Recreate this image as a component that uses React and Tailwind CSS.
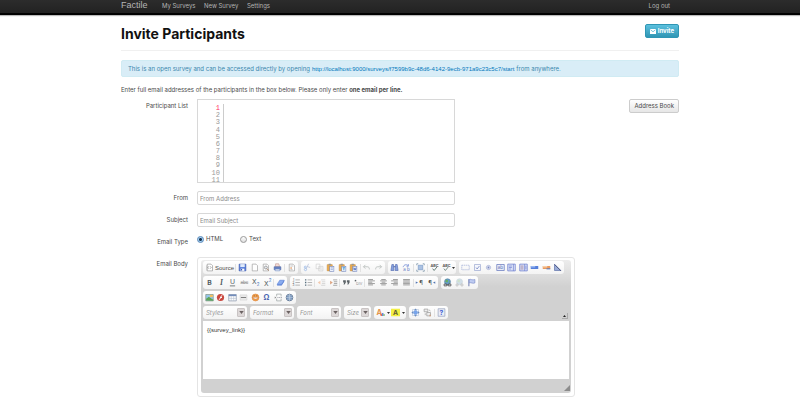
import React from "react";

const stroke = (color, width = 1) => ({ fill: "none", stroke: color, strokeWidth: width });

const Page = ({ children, edge = "#8a8a8a" }) => (
  <>
    <path d="M3 1.5h5l2 2v7H3z" fill="#fff" stroke={edge} strokeWidth="0.8" />
    {children}
  </>
);

const Clipboard = ({ children }) => (
  <>
    <rect x="1.5" y="2" width="7" height="8.5" rx="0.5" fill="#e8a33c" stroke="#b98235" strokeWidth="0.6" />
    <rect x="3.5" y="1" width="3" height="2" fill="#8b8b8b" />
    <rect x="5" y="4.5" width="5.5" height="6.5" fill="#eef3fd" stroke="#5570b8" strokeWidth="0.7" />
    {children}
  </>
);

const Lines = ({ xs, color = "#777" }) => (
  <g {...stroke(color, 1)}>
    {xs.map(([a, b], i) => (
      <path key={i} d={`M${a} ${2 + i * 1.8}H${b}`} />
    ))}
  </g>
);

const Glyph = ({ children, color = "#444", size = 8, x = 6, y = 9, ...rest }) => (
  <text x={x} y={y} fontSize={size} fill={color} textAnchor="middle" {...rest}>
    {children}
  </text>
);

const icons = {
  Source: (
    <Page>
      <path d="M5 4.5L3.8 6 5 7.5M7 4.5L8.2 6 7 7.5" {...stroke("#777", 0.9)} />
      <path d="M2 3v7" {...stroke("#bbb", 0.8)} />
    </Page>
  ),
  Save: (
    <>
      <path d="M1.5 1.5h9v9h-9z" fill="#3f6bd6" stroke="#2d4ba5" strokeWidth="0.8" />
      <path d="M3 1.5h6v4H3z" fill="#dfeafa" />
      <path d="M3.5 7.5h5v3h-5z" fill="#fff" />
      <path d="M4 8h1.5v2H4z" fill="#2d4ba5" />
    </>
  ),
  "New Page": <Page />,
  Preview: (
    <Page>
      <circle cx="6.5" cy="6" r="2" fill="#e3e8ee" stroke="#777" strokeWidth="0.9" />
      <path d="M8 7.5l2 2.5" {...stroke("#a26d4a", 1.2)} />
    </Page>
  ),
  Print: (
    <>
      <path d="M3.5 1h4l1.5 4H3z" fill="#f4d9d3" stroke="#b07a75" strokeWidth="0.7" />
      <path d="M1.5 5h9v4h-9z" fill="#5877bd" stroke="#3c559b" strokeWidth="0.7" />
      <path d="M3 8h6v2.5H3z" fill="#d5deef" stroke="#5877bd" strokeWidth="0.6" />
    </>
  ),
  Templates: (
    <Page>
      <path d="M4.5 4h4M4.5 8.5h3" {...stroke("#999", 0.8)} />
      <path d="M4.5 5.5h2v2h-2z" fill="#e39a64" />
    </Page>
  ),
  Cut: (
    <g opacity="0.5">
      <path d="M7.5 1L4 8M5 4.5L9.5 6" {...stroke("#667fb5", 1)} />
      <circle cx="3.3" cy="8.7" r="1.5" {...stroke("#3978d8", 1.1)} />
      <circle cx="3" cy="5.5" r="1.3" {...stroke("#3978d8", 1.1)} />
    </g>
  ),
  Copy: (
    <g opacity="0.4">
      <path d="M1.5 1.5h5v6h-5zM5 4.5h5.5v6H5z" fill="#fff" stroke="#888" strokeWidth="0.9" />
      <path d="M6.3 6.5h3M6.3 8.3h3" {...stroke("#888", 0.7)} />
    </g>
  ),
  Paste: (
    <Clipboard>
      <path d="M6.2 6.5h3M6.2 8.5h3" {...stroke("#5570b8", 0.7)} />
    </Clipboard>
  ),
  "Paste as plain text": (
    <Clipboard>
      <path d="M6 6.3h3.6M7.8 6.3v3.4" {...stroke("#2d8ed0", 1.2)} />
    </Clipboard>
  ),
  "Paste from Word": (
    <Clipboard>
      <path d="M6 6l.9 3.5.9-3 .9 3 .9-3.5" {...stroke("#264eae", 0.8)} />
    </Clipboard>
  ),
  Undo: <path d="M4.5 2.5L2 5l2.5 2.5M2 5h5c2 0 2.8 1 2.8 3.5" {...stroke("#b5bbb9", 1.2)} />,
  Redo: <path d="M7.5 2.5L10 5 7.5 7.5M10 5H5C3 5 2.2 6 2.2 8.5" {...stroke("#b5bbb9", 1.2)} />,
  Find: (
    <>
      <path d="M2.5 2h2.2l.5 8H1.2zM7.3 2h2.2l1.3 8h-4z" fill="#7b98dd" stroke="#3c57a5" strokeWidth="0.8" />
      <path d="M4.8 5h2.5" {...stroke("#3c57a5", 1.4)} />
    </>
  ),
  Replace: (
    <>
      <path d="M1.5 5.5C2.5 2 6 1.5 8 3.5M8.5 1.5v2.8H6" {...stroke("#5776ce", 1)} />
      <Glyph size={6} x={3.5} y={10} color="#4765bb">a</Glyph>
      <Glyph size={6} x={8.5} y={10} color="#4765bb">b</Glyph>
    </>
  ),
  "Select All": (
    <>
      <path d="M3 3h6v6H3z" fill="#a3bce0" stroke="#6288bd" strokeWidth="0.8" />
      <path d="M1 3V1h2M9 1h2v2M11 9v2H9M3 11H1V9" {...stroke("#69869d", 1)} />
    </>
  ),
  "Check Spelling": (
    <>
      <Glyph size={5} y={5} fontWeight="bold">ABC</Glyph>
      <path d="M3.5 7.5L5.5 10 9.5 5" {...stroke("#57736b", 1.3)} />
    </>
  ),
  "Spell Check As You Type": (
    <>
      <Glyph size={5} y={5} fontWeight="bold">ABC</Glyph>
      <path d="M2.5 7.5L4.5 10 8.5 5" {...stroke("#57736b", 1.1)} />
    </>
  ),
  Form: <path d="M1 3h10v6H1z" {...stroke("#8798ce", 0.9)} strokeDasharray="1.6 1" />,
  Checkbox: (
    <>
      <path d="M2 2h8v8H2z" fill="#f5f7fd" stroke="#8e9ccb" strokeWidth="0.9" />
      <path d="M4 6l1.5 2L8.5 4" {...stroke("#6577bb", 1)} />
    </>
  ),
  "Radio Button": (
    <>
      <circle cx="6" cy="6" r="2.8" fill="#dfe3f3" stroke="#97a3d0" strokeWidth="0.9" />
      <circle cx="6" cy="6" r="1.2" fill="#6c7cba" />
    </>
  ),
  "Text Field": (
    <>
      <path d="M1 2h10v8H1z" fill="#e8ecfa" stroke="#5b6fb9" strokeWidth="1" />
      <Glyph size={6} y={8} color="#4257a5">ab</Glyph>
    </>
  ),
  Textarea: (
    <>
      <path d="M1 1.5h10v9H1z" fill="#dce3f9" stroke="#5b6fc9" strokeWidth="1" />
      <path d="M8.5 1.5v9M2.5 4h4M2.5 6h4M2.5 8h3" {...stroke("#5b6fc9", 0.9)} />
    </>
  ),
  "Selection Field": (
    <>
      <path d="M1 1.5h10v9H1z" fill="#dce3f9" stroke="#5b6fc9" strokeWidth="1" />
      <path d="M2 3h4v6H2z" fill="#b8adc9" />
      <path d="M7.5 1.5v9M9.2 3.5v5" {...stroke("#5b6fc9", 0.9)} />
    </>
  ),
  Button: (
    <>
      <path d="M1 4h10v4H1z" fill="#4472d8" />
      <path d="M1 4h6v2H1z" fill="#8daff0" />
    </>
  ),
  "Image Button": (
    <>
      <path d="M1 4h10v4H1z" fill="#e8904d" />
      <path d="M1 4h6v2H1z" fill="#f7c99f" />
      <path d="M6 7h5v1.5H6z" fill="#5571b5" />
    </>
  ),
  "Hidden Field": (
    <>
      <path d="M2 1.5v8.5h8.5z" fill="#8fa3d4" stroke="#4c5f9e" strokeWidth="0.9" />
      <path d="M2 2l8.5 8.5" {...stroke("#3d4a78", 1.2)} />
    </>
  ),
  Bold: <Glyph fontWeight="bold" color="#3d4c50" size={9}>B</Glyph>,
  Italic: <Glyph fontStyle="italic" fontWeight="bold" fontFamily="Liberation Serif, serif" color="#3d4c50" size={10}>I</Glyph>,
  Underline: (
    <>
      <Glyph color="#3d4c50" size={9} y={8.5}>U</Glyph>
      <path d="M2.5 10.5h7" {...stroke("#3d4c50", 1)} />
    </>
  ),
  "Strike Through": (
    <>
      <Glyph color="#777" size={6} y={8}>abc</Glyph>
      <path d="M1 6.3h10" {...stroke("#777", 0.8)} />
    </>
  ),
  Subscript: (
    <>
      <Glyph color="#3d4c50" size={9} x={4.5} y={8.5}>X</Glyph>
      <Glyph color="#3469b4" size={6} x={9.5} y={11}>2</Glyph>
    </>
  ),
  Superscript: (
    <>
      <Glyph color="#3d4c50" size={9} x={4.5} y={10}>X</Glyph>
      <Glyph color="#3469b4" size={6} x={9.5} y={5}>2</Glyph>
    </>
  ),
  "Remove Format": (
    <>
      <path d="M5 3h6L7.5 8.5h-6z" fill="#7fa5ef" stroke="#3968ce" strokeWidth="0.7" />
      <path d="M1.5 8.5h6L11 3v1.8L7.5 10h-6z" fill="#3968ce" />
    </>
  ),
  "Numbered List": (
    <>
      <Glyph size={4} x={2} y={4}>1</Glyph>
      <Glyph size={4} x={2} y={7.5}>2</Glyph>
      <Glyph size={4} x={2} y={11}>3</Glyph>
      <path d="M4.5 2.5h6M4.5 6h6M4.5 9.5h6" {...stroke("#8b8b8b", 0.9)} />
    </>
  ),
  "Bulleted List": (
    <>
      <path d="M1.3 2.5h1.8M1.3 6h1.8M1.3 9.5h1.8" {...stroke("#466070", 1.8)} />
      <path d="M4.8 2.5h6M4.8 6h6M4.8 9.5h6" {...stroke("#8b8b8b", 0.9)} />
    </>
  ),
  "Decrease Indent": (
    <g opacity="0.45">
      <path d="M5.5 2.5H11M6.5 5H11M6.5 7.3H11M5.5 9.7H11" {...stroke("#888", 0.9)} />
      <path d="M4.5 3.5L1 6l3.5 2.5z" fill="#ec8a45" />
    </g>
  ),
  "Increase Indent": (
    <>
      <path d="M5.5 2.5H11M6.5 5H11M6.5 7.3H11M5.5 9.7H11" {...stroke("#777", 0.9)} />
      <path d="M1.5 3.5L5 6 1.5 8.5z" fill="#d99a73" />
    </>
  ),
  "Block Quote": (
    <path d="M1.5 3h3.6v3L3.5 8.5H2l1-2.5H1.5zM6.5 3h3.6v3L8.5 8.5H7l1-2.5H6.5z" fill="#4b5358" />
  ),
  "Create Div": (
    <>
      <path d="M1 2.5h2v2H1z" fill="#4b5358" />
      <Glyph size={5} x={7} y={9} color="#888">DIV</Glyph>
    </>
  ),
  "Align Left": <Lines xs={[[1.5, 8], [1.5, 10.5], [1.5, 7], [1.5, 10.5], [1.5, 8]]} />,
  Center: <Lines xs={[[3, 9], [1.5, 10.5], [3.5, 8.5], [1.5, 10.5], [3, 9]]} />,
  "Align Right": <Lines xs={[[4, 10.5], [1.5, 10.5], [5, 10.5], [1.5, 10.5], [4, 10.5]]} />,
  Justify: <Lines xs={[[1.5, 10.5], [1.5, 10.5], [1.5, 10.5], [1.5, 10.5], [1.5, 10.5]]} />,
  "Left to right": (
    <>
      <path d="M1 4.5L4 6 1 7.5z" fill="#4268ac" />
      <Glyph size={8} x={8} y={9}>¶</Glyph>
    </>
  ),
  "Right to left": (
    <>
      <Glyph size={8} x={4} y={9}>¶</Glyph>
      <path d="M11 4.5L8 6l3 1.5z" fill="#4268ac" />
    </>
  ),
  Link: (
    <>
      <circle cx="6" cy="5" r="4" fill="#5795c7" stroke="#3d6d91" strokeWidth="0.7" />
      <path d="M4 2l3 1-1 3-3-1zM8 4l1.5 1-1 2z" fill="#58a652" />
      <path d="M1.5 8h3.5v2.5H1.5zM7 8h3.5v2.5H7zM5 9.2h2" {...stroke("#4b4b4b", 1.2)} />
    </>
  ),
  Unlink: (
    <g opacity="0.4">
      <circle cx="6" cy="5" r="4" fill="#8fb4cd" stroke="#6b8c9f" strokeWidth="0.7" />
      <path d="M4 2l3 1-1 3-3-1z" fill="#84b980" />
      <path d="M1.5 8H4v2.5H1.5zM8 8h2.5v2.5H8z" {...stroke("#666", 1.1)} />
    </g>
  ),
  Anchor: (
    <>
      <path d="M2.5 1.5v9.5" {...stroke("#4f61a0", 1.2)} />
      <path d="M3 2c2-1 4 1.5 7.5 0v4.5c-3 1.5-5-1-7.5 0z" fill="#b9c8f2" stroke="#6577bd" strokeWidth="0.8" />
    </>
  ),
  Image: (
    <>
      <path d="M1 2h10v8.5H1z" fill="#8bc2ee" stroke="#6a7b63" strokeWidth="0.8" />
      <path d="M1.5 10V7.5L5 5l6 4v1.2z" fill="#4d9b45" />
      <path d="M6.5 2.5h4v3h-4z" fill="#f3bb52" />
    </>
  ),
  Flash: (
    <>
      <circle cx="6" cy="6" r="4.8" fill="#c5352b" />
      <path d="M8.5 3C6 3 6.5 8.5 3.8 9M5.5 6h2.5" {...stroke("#fff", 1.3)} />
    </>
  ),
  Table: (
    <>
      <path d="M1 2h10v8.5H1z" fill="#fff" stroke="#74839d" strokeWidth="0.9" />
      <path d="M1 2h10v2.2H1z" fill="#6582b5" />
      <path d="M1 7.2h10M4.3 4v6.5M7.6 4v6.5" {...stroke("#a7b3c5", 0.7)} />
    </>
  ),
  "Horizontal Line": (
    <>
      <path d="M1.5 2.5h9v7h-9z" fill="#e8e8e8" stroke="#c5c5c5" strokeWidth="0.6" />
      <path d="M2.5 6h7" {...stroke("#666", 1.2)} />
    </>
  ),
  Smiley: (
    <>
      <circle cx="6" cy="6" r="4.6" fill="#f59b3a" stroke="#d97a2d" strokeWidth="0.8" />
      <path d="M2.5 5.8h7c-.5 3-6.5 3-7 0z" fill="#fff" stroke="#b5602a" strokeWidth="0.6" />
      <path d="M4.3 3v1.5M7.7 3v1.5" {...stroke("#7b4520", 1)} />
    </>
  ),
  "Special Character": <Glyph size={10} y={9.5} color="#3b59ac" fontWeight="bold">Ω</Glyph>,
  "Page Break": (
    <>
      <path d="M3.5 4.5v-3h6v3M3.5 7.5v3h6v-3" {...stroke("#8d9696", 0.9)} />
      <path d="M4.5 6h6.5" {...stroke("#777788", 0.9)} strokeDasharray="1.5 0.8" />
      <path d="M1 4.5L3 6 1 7.5z" fill="#777" />
    </>
  ),
  IFrame: (
    <>
      <circle cx="6" cy="6" r="4.5" fill="#6e8fba" stroke="#465d7c" strokeWidth="0.9" />
      <path d="M1.5 6h9M6 1.5v9M3 3c2 1.5 4 1.5 6 0M3 9c2-1.5 4-1.5 6 0" {...stroke("#c5d5e5", 0.7)} />
    </>
  ),
  "Text Color": (
    <>
      <Glyph size={10} x={4.5} y={9} color="#e28b3c" fontWeight="bold">A</Glyph>
      <path d="M6 7.5h2v3H6z" fill="#e25d4a" />
      <path d="M8 6.5h2v4H8z" fill="#5482d5" />
      <path d="M10 8h1.5v2.5H10z" fill="#6bb04f" />
    </>
  ),
  "Background Color": (
    <>
      <path d="M0 1h12v10H0z" fill="#f3ef2f" />
      <Glyph size={9} y={9} color="#4b4b20" fontWeight="bold">A</Glyph>
    </>
  ),
  Maximize: (
    <>
      <path d="M2 2h8v8H2z" fill="#fff" stroke="#9db4d4" strokeWidth="0.7" />
      <circle cx="6" cy="6" r="3" fill="#6a9be9" />
      <path d="M6 .5L8 3H4zM6 11.5L8 9H4zM.5 6L3 4v4zM11.5 6L9 4v4z" fill="#5c81b8" />
    </>
  ),
  "Show Blocks": (
    <>
      <path d="M1.5 1.5h5v3.5h-5zM5 6h5v4.5H5z" fill="#eee" stroke="#8a8a8a" strokeWidth="0.9" />
      <path d="M3 7v2.5M8 2.5l2 1.5" {...stroke("#999", 1)} />
      <path d="M8.5 9h2v2h-2z" fill="#c99571" />
    </>
  ),
  About: (
    <>
      <path d="M1.5 1h9v10h-9z" fill="#e9edf7" stroke="#8793b5" strokeWidth="0.9" />
      <Glyph size={9} y={9.3} color="#2e4fd0" fontWeight="bold">?</Glyph>
    </>
  ),
};

const Tool = ({ name }) => (
  <button type="button" aria-label={name} className="flex h-full w-[11px] shrink-0 items-center justify-center">
    <svg viewBox="0 0 12 12" className="size-[9px] opacity-90">{icons[name]}</svg>
  </button>
);

const Separator = () => <span className="h-2 w-px shrink-0 bg-[#e2e2e2]" />;

const Caret = () => (
  <svg viewBox="0 0 6 4" className="h-[2px] w-[3px] shrink-0"><path d="M0 0h6L3 4z" fill="#333" /></svg>
);

const Group = ({ width, items = [], children }) => (
  <div className={`${width} flex h-[13px] items-center justify-between rounded-[3px] bg-linear-to-b from-white to-[#f3f3f3] px-px`}>
    {children}
    {items.map((item, i) => (item === "|" ? <Separator key={i} /> : <Tool key={i} name={item} />))}
  </div>
);

const Combo = ({ label, width }) => (
  <div className={`${width} flex h-[13px] items-center rounded-[3px] bg-linear-to-b from-white to-[#f3f3f3] pr-[2px] pl-[3px]`}>
    <select aria-label={label} className="min-w-0 flex-1 appearance-none bg-transparent text-[6px] leading-[8px] text-[#999] italic">
      <option>{label}</option>
    </select>
    <span className="flex h-[9px] w-2 items-center justify-center rounded-[1px] border border-[#c9c4c4] bg-[#ddd8d8]">
      <svg viewBox="0 0 6 4" className="h-[3px] w-[5px]"><path d="M0 0h6L3 4z" fill="#6b6262" /></svg>
    </span>
  </div>
);

const Field = ({ label, id, children }) => (
  <div className="flex items-start">
    <label htmlFor={id} className="mr-[9px] w-[67px] shrink-0 pt-[3px] text-right">{label}</label>
    {children}
  </div>
);

const inputStyle =
  "h-[14px] w-[258px] rounded-[2px] border border-[#d8d8d8] bg-white px-[2px] text-[6px] leading-[8px] text-[#555] outline-none placeholder:text-[#8c8c8c]";

const radioStyle =
  "size-[7px] appearance-none rounded-full border border-[#999] bg-linear-to-b from-white to-[#ddd] checked:border-[#5b88b8] checked:bg-[radial-gradient(circle,#17334f_0_1px,#a5d2f5_2px)]";

export default function App() {
  return (
    <div className="min-h-screen bg-white font-[Inter,'Liberation_Sans',Arial,sans-serif] text-[6px] leading-[8px] text-[#4a4a4a]">
      <header className="h-[15px] border-b-2 border-black bg-linear-to-b from-[#2c2c2c] to-[#222] shadow-[0_1px_1px_#bbb]">
        <nav className="mx-auto flex max-w-[558px] items-center pt-px text-[#b5b5b5]">
          <a href="#" className="w-[41px] font-['Liberation_Sans',Arial,sans-serif] text-[9px] leading-[9px]">Factile</a>
          <a href="#" className="w-[42px]">My Surveys</a>
          <a href="#" className="w-[43px]">New Survey</a>
          <a href="#">Settings</a>
          <a href="#" className="mr-[9px] ml-auto">Log out</a>
        </nav>
      </header>

      <main className="mx-auto max-w-[558px]">
        <div className="flex h-9 items-start justify-between border-b border-[#f0f0f0] pt-[9px]">
          <h1 className="text-[14px] leading-[20px] font-bold text-[#111]">Invite Participants</h1>
          <button type="button" className="flex h-[14px] items-center gap-[2px] rounded-[2px] border border-[#2f96b4] bg-linear-to-b from-[#5bc0de] to-[#2f96b4] px-1 font-bold text-white">
            <svg viewBox="0 0 12 10" className="h-[5px] w-[6px]">
              <path d="M0 0h12v10H0z" fill="#fff" />
              <path d="M1 1.5l5 4 5-4" {...stroke("#45abc9", 1.4)} />
            </svg>
            Invite
          </button>
        </div>

        <p className="mt-[9px] flex h-[17px] items-center gap-[2px] rounded-[2px] border border-[#d0ebf3] bg-[#d9edf7] px-[6px] text-[#3a87ad]">
          <span>This is an open survey and can be accessed directly by opening</span>
          <a href="#" className="font-['Liberation_Sans',Arial,sans-serif] text-[#0077bb]">http://localhost:9000/surveys/f7599b9c-48d6-4142-9ecb-971a9c23c5c7/start</a>
          <span>from anywhere.</span>
        </p>

        <p className="mt-[9px]">
          Enter full email addresses of the participants in the box below. Please only enter <b>one email per line.</b>
        </p>

        <form className="mt-[5px]">
          <div className="flex items-start justify-between">
            <Field label="Participant List" id="participants">
              <div className="flex h-[84px] w-[258px] overflow-hidden border border-[#d8d8d8] pt-1">
                <ol className="grid h-[79px] w-[26px] shrink-0 grid-rows-11 border-r border-[#ccc] pr-[3px] text-right font-['Liberation_Mono',monospace] text-[7px] text-[#999]">
                  {Array.from({ length: 11 }, (_, i) => (
                    <li key={i} className={i === 0 ? "text-[#f36]" : ""}>{i + 1}</li>
                  ))}
                </ol>
                <textarea id="participants" className="min-w-0 flex-1 resize-none outline-none" />
              </div>
            </Field>
            <button type="button" className="h-[14px] rounded-[2px] border border-[#ccc] bg-linear-to-b from-white to-[#e6e6e6] px-1">Address Book</button>
          </div>

          <div className="mt-2 flex flex-col gap-2">
            <Field label="From" id="from">
              <input id="from" type="text" placeholder="From Address" className={inputStyle} />
            </Field>
            <Field label="Subject" id="subject">
              <input id="subject" type="text" placeholder="Email Subject" className={inputStyle} />
            </Field>
            <div className="flex h-[14px] items-start">
              <span className="mr-[9px] w-[67px] pt-[3px] text-right">Email Type</span>
              <label className="flex w-[43px] items-center gap-[2px]">
                <input type="radio" name="type" defaultChecked className={radioStyle} />HTML
              </label>
              <label className="flex items-center gap-[2px]">
                <input type="radio" name="type" className={radioStyle} />Text
              </label>
            </div>
            <Field label="Email Body" id="body">
              <div className="w-[378px] rounded-[3px] border border-[#e4e4e4] p-[3px] pt-[2px]">
                <div className="rounded-[3px] bg-linear-to-b from-[#ececec] to-[#d1d1d1] to-20% px-[2px] pt-px pb-[14px]">
                  <div className="flex flex-col gap-[2px]">
                    <div className="flex gap-[3px]">
                      <Group width="w-[95px]">
                        <button type="button" className="flex items-center gap-px pl-px font-['Liberation_Sans',Arial,sans-serif]">
                          <svg viewBox="0 0 12 12" className="size-[9px]">{icons.Source}</svg>Source
                        </button>
                        <Separator />
                        <Tool name="Save" />
                        <Tool name="New Page" />
                        <Tool name="Preview" />
                        <Tool name="Print" />
                        <Separator />
                        <Tool name="Templates" />
                      </Group>
                      <Group width="w-[84px]" items={["Cut", "Copy", "Paste", "Paste as plain text", "Paste from Word", "|", "Undo", "Redo"]} />
                      <Group width="w-[68px]">
                        <Tool name="Find" />
                        <Tool name="Replace" />
                        <Separator />
                        <Tool name="Select All" />
                        <Separator />
                        <Tool name="Check Spelling" />
                        <span className="flex h-full items-center">
                          <Tool name="Spell Check As You Type" />
                          <Caret />
                        </span>
                      </Group>
                      <Group width="w-[105px]" items={["Form", "Checkbox", "Radio Button", "Text Field", "Textarea", "Selection Field", "Button", "Image Button", "Hidden Field"]} />
                    </div>
                    <div className="flex gap-[3px]">
                      <Group width="w-[84px]" items={["Bold", "Italic", "Underline", "Strike Through", "Subscript", "Superscript", "|", "Remove Format"]} />
                      <Group width="w-[148px]" items={["Numbered List", "Bulleted List", "|", "Decrease Indent", "Increase Indent", "|", "Block Quote", "Create Div", "|", "Align Left", "Center", "Align Right", "Justify", "|", "Left to right", "Right to left"]} />
                      <Group width="w-[37px]" items={["Link", "Unlink", "Anchor"]} />
                    </div>
                    <div className="flex">
                      <Group width="w-[93px]" items={["Image", "Flash", "Table", "Horizontal Line", "Smiley", "Special Character", "Page Break", "IFrame"]} />
                    </div>
                    <div className="flex items-end gap-[3px]">
                      <Combo label="Styles" width="w-[44px]" />
                      <Combo label="Format" width="w-[44px]" />
                      <Combo label="Font" width="w-[44px]" />
                      <Combo label="Size" width="w-[27px]" />
                      <Group width="w-[32px]">
                        <Tool name="Text Color" />
                        <Caret />
                        <Tool name="Background Color" />
                        <Caret />
                      </Group>
                      <Group width="w-[39px]" items={["Maximize", "Show Blocks", "|", "About"]} />
                      <button type="button" aria-label="Collapse Toolbar" className="mr-px ml-auto flex size-[6px] items-center justify-center border-r border-b border-[#aaa]">
                        <svg viewBox="0 0 6 4" className="h-[2px] w-[3px]"><path d="M0 4h6L3 0z" fill="#222" /></svg>
                      </button>
                    </div>
                  </div>
                  <textarea id="body" defaultValue="{{survey_link}}" className="mt-[2px] block h-[58px] w-full resize-none bg-white px-1 pt-[5px] font-['Liberation_Sans',Arial,sans-serif] text-[#333] outline-none" />
                </div>
                <svg viewBox="0 0 6 6" className="-mt-2 mr-px mb-[2px] ml-auto block size-[6px]"><path d="M6 0v6H0z" fill="#8c8c8c" /></svg>
              </div>
            </Field>
          </div>
        </form>
      </main>
    </div>
  );
}
